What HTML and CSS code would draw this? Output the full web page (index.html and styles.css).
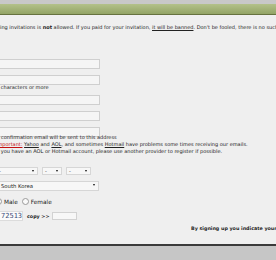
FILE: index.html
```html
<!DOCTYPE html>
<html lang="en">
<head>
  <meta charset="UTF-8">
  <title>Sign up</title>
  <link rel="stylesheet" href="styles.css">
</head>
<body>
  <div class="topband"></div>
  <div class="greenbar"></div>

  <p class="notice">Selling invitations is <b>not</b> allowed. If you paid for your invitation, <u>it will be banned</u>. Don't be fooled, there is no such thing as a paid invitation.</p>

  <form class="signup">
    <div class="row"><input type="text" class="field"></div>
    <div class="row"><input type="password" class="field"></div>
    <div class="hint">6 characters or more</div>
    <div class="row"><input type="password" class="field"></div>
    <div class="row"><input type="text" class="field"></div>
    <div class="row"><input type="text" class="field"></div>

    <div class="mailnote">
      <div>A confirmation email will be sent to this address</div>
      <div><span class="red">Important:</span> <u>Yahoo</u> and <u>AOL</u>, and sometimes <u>Hotmail</u> have problems some times receiving our emails.</div>
      <div>If you have an AOL or Hotmail account, please use another provider to register if possible.</div>
    </div>

    <div class="dates">
      <span class="pick wide">-</span>
      <span class="pick">-</span>
      <span class="pick mid">-</span>
    </div>

    <div class="pick country">South Korea</div>

    <div class="gender">
      <span class="radio"></span><span>Male</span>
      <span class="radio"></span><span>Female</span>
    </div>

    <div class="captcha">
      <span class="code">72513</span>
      <span class="copy">copy &gt;&gt;</span>
      <input type="text" class="small">
    </div>

    <div class="terms">By signing up you indicate your agreement to the terms of use</div>
  </form>

  <div class="bottombar"></div>
</body>
</html>
```

FILE: styles.css
```css
html, body {
  margin: 0;
  overflow: hidden;
}

body {
  width: 276px;
  height: 260px;
  background-color: #efefef;
  font-family: "DejaVu Sans", Verdana, sans-serif;
  font-size: 5px;
  color: #222;
  display: flex;
  flex-direction: column;
}

.topband {
  height: 4px;
  background-color: #c8c8c8;
}

.greenbar {
  height: 10px;
  background: linear-gradient(#b3c18a, #93a466);
  border-bottom: 1px solid #66723f;
}

.notice {
  margin: 9px 0 0 -9px;
  white-space: nowrap;
}

.signup {
  display: flex;
  flex-direction: column;
  margin: 29px 0 0 -4px;
}

.row {
  height: 16px;
}

.field {
  box-sizing: border-box;
  width: 104px;
  height: 10px;
  border: 1px solid #cfcfcf;
  background-color: #f5f5f5;
  margin: 0;
  padding: 0;
}

.hint {
  margin: -7px 0 0 0;
  height: 11px;
}

.mailnote {
  margin: -9px 0 0 0;
  line-height: 6.8px;
  white-space: nowrap;
}

.red {
  color: #c41010;
  text-decoration: underline;
}

.dates {
  display: flex;
  gap: 4px;
  margin-top: 13px;
}

.pick {
  position: relative;
  box-sizing: border-box;
  height: 8px;
  width: 20px;
  padding-left: 2px;
  line-height: 7px;
  border: 1px solid #d6d6d6;
  background-color: #f7f7f7;
}

.pick::after {
  content: "";
  position: absolute;
  right: 3px;
  top: 2px;
  border-left: 1.5px solid transparent;
  border-right: 1.5px solid transparent;
  border-top: 2.5px solid #111;
}

.pick.wide {
  width: 42px;
}

.pick.mid {
  width: 25px;
}

.country {
  width: 103px;
  height: 10px;
  line-height: 9px;
  margin-top: 6px;
  padding-left: 4px;
  font-size: 5.3px;
}

.gender {
  display: flex;
  align-items: center;
  gap: 2px;
  margin: 7px 0 0 -3px;
  height: 7px;
  font-size: 5.8px;
}

.radio {
  box-sizing: border-box;
  width: 7px;
  height: 7px;
  border: 1px solid #9a9a9a;
  border-radius: 50%;
  background-color: #fafafa;
  margin-left: 2px;
}

.captcha {
  display: flex;
  align-items: center;
  gap: 3px;
  margin: 6px 0 0 -1px;
  height: 10px;
}

.code {
  box-sizing: border-box;
  width: 28px;
  height: 10px;
  padding-left: 5px;
  background-color: #fbfbfb;
  border: 1px solid #dcdcdc;
  color: #3a4d7a;
  font-family: "DejaVu Sans Mono", monospace;
  font-size: 7px;
  line-height: 8px;
}

.copy {
  font-weight: bold;
  font-size: 4.8px;
  margin-left: 1px;
}

.small {
  box-sizing: border-box;
  width: 25px;
  height: 8px;
  margin: 0;
  padding: 0;
  border: 1px solid #d2d2d2;
  background-color: #f7f7f7;
}

.terms {
  margin: 5px 0 0 195px;
  font-weight: bold;
  font-size: 4.8px;
  white-space: nowrap;
  height: 12px;
}

.bottombar {
  margin-top: auto;
  height: 14px;
  background-color: #c6c6c6;
  border-top: 2px solid #3a3a3a;
}
```
